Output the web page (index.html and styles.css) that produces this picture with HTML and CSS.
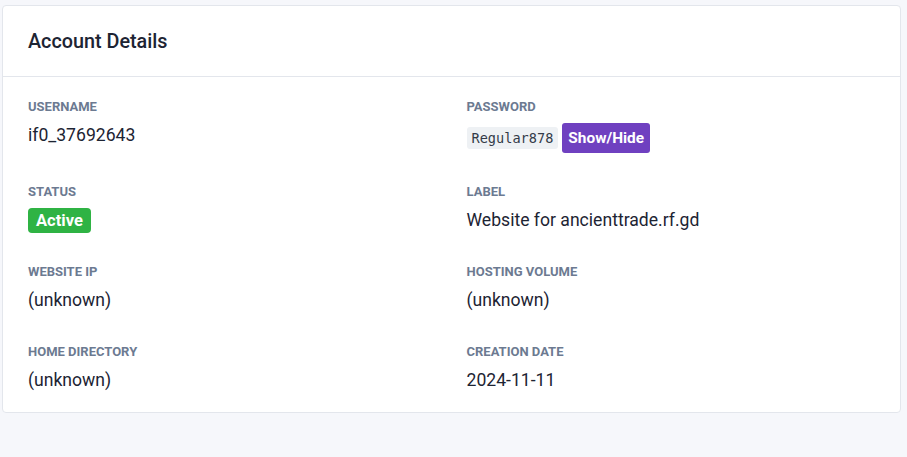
FILE: index.html
```html
<!DOCTYPE html>
<html>
<head>
<meta charset="utf-8">
<link rel="stylesheet" href="styles.css">
</head>
<body>
<div class="card">
  <div class="card-header"><h3 class="card-title">Account Details</h3></div>
  <div class="card-body">
    <div class="grid">
      <div class="field">
        <div class="label">Username</div>
        <div class="value">if0_37692643</div>
      </div>
      <div class="field">
        <div class="label">Password</div>
        <div class="value pw"><code class="code">Regular878</code><button class="btn">Show/Hide</button></div>
      </div>
      <div class="field">
        <div class="label">Status</div>
        <div class="value"><span class="badge">Active</span></div>
      </div>
      <div class="field">
        <div class="label">Label</div>
        <div class="value">Website for ancienttrade.rf.gd</div>
      </div>
      <div class="field">
        <div class="label">Website IP</div>
        <div class="value">(unknown)</div>
      </div>
      <div class="field">
        <div class="label">Hosting Volume</div>
        <div class="value">(unknown)</div>
      </div>
      <div class="field">
        <div class="label">Home Directory</div>
        <div class="value">(unknown)</div>
      </div>
      <div class="field">
        <div class="label">Creation Date</div>
        <div class="value">2024-11-11</div>
      </div>
    </div>
  </div>
</div>
</body>
</html>
```
FILE: styles.css
```css
html, body {
  margin: 0;
  padding: 0;
  background: #f6f7fb;
  font-family: Roboto, "Liberation Sans", sans-serif;
  color: #1d2433;
}
body {
  padding: 5px 6px 0 2px;
}
.card {
  background: #fff;
  border: 1px solid #e3e6ec;
  border-radius: 4px;
}
.card-header {
  padding: 24px 25px 22px 25px;
  border-bottom: 1px solid #e3e6ec;
}
.card-title {
  margin: 0;
  font-size: 19.8px;
  line-height: 24px;
  font-weight: 500;
  color: #1d2433;
}
.card-body {
  padding: 21px 25px 19px 25px;
}
.grid {
  display: grid;
  grid-template-columns: 1fr 1fr;
  column-gap: 30px;
  row-gap: 30px;
}
.label {
  font-size: 13px;
  line-height: 18px;
  font-weight: 700;
  text-transform: uppercase;
  color: #6c7a91;
  margin-bottom: 6px;
}
.value {
  font-size: 17.6px;
  line-height: 26px;
  color: #1d2433;
}
.pw {
  display: flex;
  align-items: center;
  gap: 4px;
  height: 31px;
}
.code {
  font-family: "DejaVu Sans Mono", "Liberation Mono", monospace;
  font-size: 13.6px;
  line-height: 22px;
  padding: 0 5px;
  background: #eef1f4;
  color: #333b48;
  border-radius: 3px;
}
.btn {
  font-family: Roboto, "Liberation Sans", sans-serif;
  font-size: 15.4px;
  font-weight: 700;
  color: #fff;
  background: #6f40c0;
  border: none;
  border-radius: 3px;
  height: 30px;
  padding: 0 6px;
}
.badge {
  display: inline-block;
  background: #2fb344;
  color: #fff;
  font-size: 16.5px;
  font-weight: 700;
  line-height: 25px;
  padding: 0 8px;
  border-radius: 4px;
  vertical-align: top;
  margin-top: 1px;
}
```
